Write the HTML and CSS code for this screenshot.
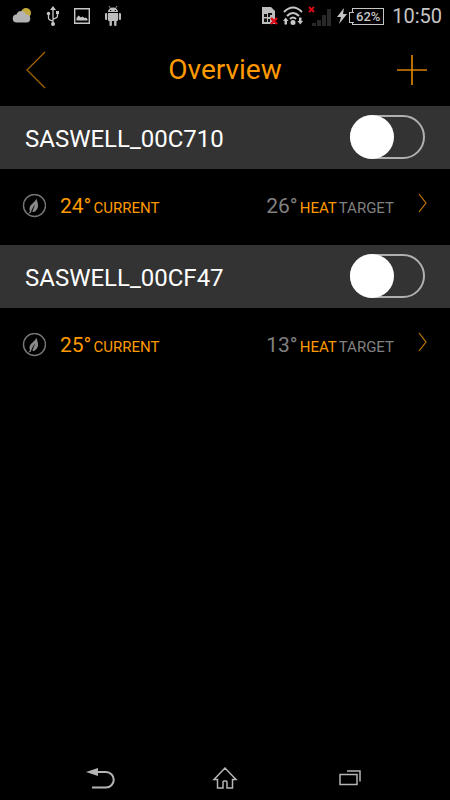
FILE: index.html
```html
<!DOCTYPE html>
<html lang="en">
<head>
<meta charset="utf-8">
<meta name="viewport" content="width=device-width, initial-scale=1">
<title>Overview</title>
<link rel="stylesheet" href="styles.css">
</head>
<body>
<svg class="defs" aria-hidden="true">
  <symbol id="leaf" viewBox="0 0 24 24">
    <circle cx="12.500" cy="11.500" r="11" fill="none" stroke="#777" stroke-width="1.400"/>
    <path d="M14.500 4.500c0 2 2 4.500 1.500 8-.5 3.500-3 5.500-5.500 5.500 0-2.500 2-4.500 2.500-7.500-1.500 2-3.500 5-4 8l-2.500 1c.2-1 1-1.500 1.500-2-1-2.500-.5-5 1-6.500C11.500 8.500 13.500 7 14.500 4.500z" fill="#8a8a8a"/>
  </symbol>
  <symbol id="chevron" viewBox="0 0 10 20">
    <path d="M1 1l7 9-7 9" fill="none" stroke="#c87800" stroke-width="1.200"/>
  </symbol>
</svg>
<div class="screen">
  <div class="status">
    <div class="status-group notices">
      <svg width="20" height="20" viewBox="0 0 20 20"><circle cx="14" cy="7" r="5" fill="#c5a93c"/><path d="M5 16.500a4 4 0 0 1-.5-8 5 5 0 0 1 9.500 0 4 4 0 0 1 .5 8z" fill="#b3b3b3"/></svg>
      <svg width="14" height="20" viewBox="0 0 14 20" fill="none" stroke="#c6c6c6" stroke-width="1.300"><path d="M7 3v14M2.500 8v4q0 2 4.500 3M11.500 7v3q0 2-4.500 3"/><path d="M4 4l3-4 3 4z" fill="#c6c6c6" stroke="none"/><circle cx="7" cy="18" r="2" fill="#c6c6c6" stroke="none"/><circle cx="2.500" cy="7.500" r="1.700" fill="#c6c6c6" stroke="none"/><path d="M10 5h3v3h-3z" fill="#c6c6c6" stroke="none"/></svg>
      <svg width="16" height="16" viewBox="0 0 16 16"><path d="M.7.700h14.600v14.600H.7z" fill="none" stroke="#c6c6c6" stroke-width="1.400"/><path d="M2.500 12.500V10l2-2.500L7 9.500l1.500-1 2 1.500 1.500-.5 1.500 1.500v1.500z" fill="#c6c6c6"/></svg>
      <svg width="18" height="20" viewBox="0 0 18 20" fill="#bdbdbd"><path d="M4 6a5 4.500 0 0 1 10 0zM4 7h10v7q0 1-1 1H5q-1 0-1-1z"/><rect x="1" y="7" width="2.200" height="7" rx="1.100"/><rect x="14.800" y="7" width="2.200" height="7" rx="1.100"/><rect x="5.500" y="13" width="2.400" height="7" rx="1"/><rect x="10.100" y="13" width="2.400" height="7" rx="1"/><path d="M5 0l2 3M13 0l-2 3" stroke="#bdbdbd" stroke-width=".8"/><path d="M6 4h1.200v1H6zM10.800 4H12v1h-1.200z" fill="#000"/></svg>
    </div>
    <div class="status-group system">
      <svg width="16" height="18" viewBox="0 0 16 18"><path d="M0 0h9l4 4v13H0z" fill="#bdbdbd"/><path d="M2 7h3v3H2zM6 6h4v2H8v2H6zM2 11.500h3V15H2zM6 12h2v3H6z" fill="#111"/><path d="M9 11l6 6M15 11l-6 6" stroke="#e00914" stroke-width="2.400"/></svg>
      <svg width="20" height="20" viewBox="0 0 20 20" fill="none" stroke="#c6c6c6" stroke-width="2"><path d="M1 6Q10-3 19 6M4 10q6-6 12 0M7 13q3-3 6 0"/><circle cx="10" cy="16.500" r="2.500" fill="#c6c6c6" stroke="none"/><path d="M0 15l2.700-3.500L5.500 15H4v3.500H1.500V15zM14.500 15H16v-3.500h2.500V15H20l-2.700 3.500z" fill="#c6c6c6" stroke="none"/></svg>
      <svg width="24" height="20" viewBox="0 0 24 20"><path d="M4 17h4v3H4zM9 14h4v6H9zM14 9h4v11h-4zM19 3h4v17h-4z" fill="#292929"/><path d="M1 1l5 5M6 1L1 6" stroke="#e00914" stroke-width="1.800"/></svg>
      <span class="battery"><svg width="10" height="16" viewBox="0 0 10 16"><path d="M7 0L0 9h4l-2 7 8-10H6z" fill="#c6c6c6"/></svg><span class="level">62%</span></span>
      <span class="clock">10:50</span>
    </div>
  </div>
  <header class="header">
    <button class="back" aria-label="Back"><svg width="20" height="38" viewBox="0 0 20 38"><path d="M19 1L1 19l18 18" fill="none" stroke="#a86400" stroke-width="1.200"/></svg></button>
    <h1>Overview</h1>
    <button class="add" aria-label="Add device"><svg width="32" height="32" viewBox="0 0 32 32"><path d="M16 1v30M1 16h30" stroke="#d98200" stroke-width="1.700"/></svg></button>
  </header>
  <main>
    <section class="device">
      <div class="device-head">
        <h2><label for="s1">SASWELL_00C710</label></h2>
        <input class="switch" id="s1" type="checkbox" role="switch">
      </div>
      <a class="reading" href="#device-1">
        <svg class="leaf"><use href="#leaf"/></svg>
        <span class="values current"><span class="temp">24°</span><span>CURRENT</span></span>
        <span class="values target"><span class="temp">26°</span><span class="heat">HEAT</span><span>TARGET</span></span>
        <svg class="chevron"><use href="#chevron"/></svg>
      </a>
    </section>
    <section class="device">
      <div class="device-head">
        <h2><label for="s2">SASWELL_00CF47</label></h2>
        <input class="switch" id="s2" type="checkbox" role="switch">
      </div>
      <a class="reading" href="#device-2">
        <svg class="leaf"><use href="#leaf"/></svg>
        <span class="values current"><span class="temp">25°</span><span>CURRENT</span></span>
        <span class="values target"><span class="temp">13°</span><span class="heat">HEAT</span><span>TARGET</span></span>
        <svg class="chevron"><use href="#chevron"/></svg>
      </a>
    </section>
  </main>
  <nav class="navbar" aria-label="System">
    <button aria-label="Back"><svg width="30" height="22" viewBox="0 0 30 22"><path d="M10 5h11a7.500 7.500 0 0 1 0 15.500H7" fill="none" stroke="#b5b5b5" stroke-width="2"/><path d="M1 5l12-4v8z" fill="#b5b5b5"/></svg></button>
    <button aria-label="Home"><svg width="26" height="24" viewBox="0 0 26 24"><path d="M13 2L2 13.500h3.500V22H11v-6q0-1 1-1h2q1 0 1 1v6h5.500v-8.500H24z" fill="none" stroke="#b5b5b5" stroke-width="1.500"/></svg></button>
    <button aria-label="Recent apps"><svg width="22" height="16" viewBox="0 0 22 16" fill="none" stroke="#b5b5b5" stroke-width="1.500"><path d="M1 4.500h17v10H1zM8 1h13v10.500"/></svg></button>
  </nav>
</div>
</body>
</html>
```
FILE: styles.css
```css
* { box-sizing: border-box; }
body { margin: 0; background: #000; color: #fff; font-family: Roboto, "Noto Sans", sans-serif; }
button { padding: 0; border: 0; background: none; display: flex; align-items: center; justify-content: center; }
svg { flex: none; display: block; }
h1, h2 { margin: 0; font-weight: 400; }
.defs { position: absolute; width: 0; height: 0; }
.screen { min-height: 100vh; display: flex; flex-direction: column; }
.status { height: 32px; padding: 0 8px 0 12px; display: flex; align-items: center; justify-content: space-between; color: #c6c6c6; }
.status-group { display: flex; align-items: center; }
.notices { gap: 14px; }
.system { gap: 5px; }
.battery { display: flex; align-items: center; gap: 5px; }
.level { position: relative; width: 32px; height: 17px; border: 1px solid #c6c6c6; font-size: 13px; font-weight: 500; line-height: 15px; text-align: center; }
.level::before { content: ""; position: absolute; left: -4px; top: 3px; width: 4px; height: 9px; border: 1px solid #c6c6c6; border-right: 0; background: #000; }
.clock { margin-left: 3px; font-size: 20px; line-height: 32px; }
.header { height: 74px; padding: 2px 22px 0 26px; display: grid; grid-template-columns: 36px 1fr 40px; align-items: center; color: #ff9900; }
.header h1 { font-size: 28px; line-height: 36px; text-align: center; }
.back { justify-content: flex-start; }
.add { justify-content: flex-end; }
.device-head { height: 63px; padding: 0 25px; display: flex; align-items: center; justify-content: space-between; background: #333; }
.device-head h2 { padding-top: 2px; font-size: 24px; line-height: 32px; }
.switch { appearance: none; margin: 0 0 2px; width: 75px; height: 44px; border: 2px solid #b0b0b0; border-radius: 22px; display: flex; align-items: center; }
.switch::before { content: ""; width: 44px; height: 44px; margin: 0 -2px; border-radius: 50%; background: #fff; flex: none; }
.switch:checked { justify-content: flex-end; }
.reading { height: 76px; padding: 0 22px; display: flex; align-items: center; color: #808080; text-decoration: none; font-size: 15px; line-height: 28px; }
.values { display: flex; align-items: baseline; gap: 2px; }
.temp { font-size: 21px; }
.leaf { width: 24px; height: 24px; margin: 0 14px 2px 0; }
.current { color: #ff9900; }
.target { margin-left: auto; margin-right: 24px; }
.heat { color: #ff9900; }
.chevron { width: 10px; height: 20px; margin-bottom: 8px; }
.navbar { height: 44px; margin-top: auto; padding: 0 38px; display: grid; grid-template-columns: repeat(3, 1fr); }
```
